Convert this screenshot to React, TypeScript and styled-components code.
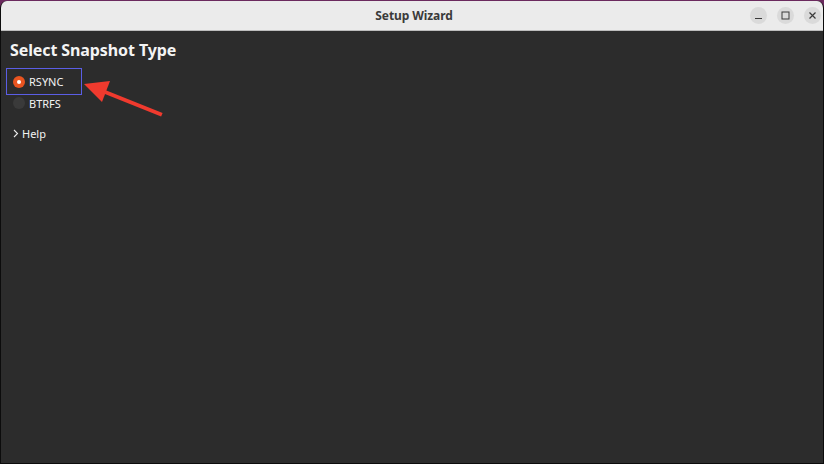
import React from "react";
import styled, { createGlobalStyle } from "styled-components";

const Global = createGlobalStyle`
  html, body { margin: 0; padding: 0; background: #5e2750; }
  body { font-family: "Noto Sans", "DejaVu Sans", sans-serif; }
  * { box-sizing: border-box; }
`;

const Screen = styled.div`
  width: 824px;
  height: 464px;
  padding-top: 1px;
  background: #6b2a5e;
  display: flex;
  flex-direction: column;
  position: relative;
  overflow: hidden;
`;

const Window = styled.div`
  flex: 1;
  display: flex;
  flex-direction: column;
  border: 1px solid #0c0c0c;
  border-top: none;
  border-radius: 7px 7px 0 0;
  overflow: hidden;
  background: #2c2c2c;
`;

const TitleBar = styled.div`
  height: 30px;
  flex: none;
  background: #ebebeb;
  border-bottom: 1px solid #bdbdbd;
  display: grid;
  grid-template-columns: 1fr auto 1fr;
  align-items: center;
`;

const Title = styled.div`
  grid-column: 2;
  font-size: 12px;
  font-weight: 700;
  color: #3a3a3a;
  letter-spacing: -0.1px;
  padding-left: 4px;
`;

const Controls = styled.div`
  grid-column: 3;
  justify-self: end;
  display: flex;
  gap: 10px;
  padding-right: 2px;
`;

const CtrlButton = styled.div`
  width: 17px;
  height: 17px;
  border-radius: 50%;
  background: #dadada;
  display: flex;
  align-items: center;
  justify-content: center;
  color: #3a3a3a;
`;

const Content = styled.div`
  flex: 1;
  padding: 8px 5px 0 5px;
  display: flex;
  flex-direction: column;
  color: #f2f2f2;
`;

const Heading = styled.h1`
  margin: 0 0 7px 4px;
  font-size: 16px;
  font-weight: 700;
  color: #f4f4f4;
  line-height: 22px;
  letter-spacing: -0.1px;
`;

const Options = styled.div`
  display: flex;
  flex-direction: column;
  align-items: flex-start;
`;

const OptionRow = styled.div<{ $focused?: boolean }>`
  display: flex;
  align-items: center;
  gap: 4px;
  height: ${(p) => (p.$focused ? "27px" : "16px")};
  width: ${(p) => (p.$focused ? "76px" : "auto")};
  padding-left: ${(p) => (p.$focused ? "6px" : "7px")};
  border: ${(p) => (p.$focused ? "1.5px solid #5b5ee6" : "none")};
  font-size: 11px;
  color: #f2f2f2;
`;

const Radio = styled.span<{ $checked?: boolean }>`
  width: 12px;
  height: 12px;
  border-radius: 50%;
  background: ${(p) => (p.$checked ? "#e95420" : "#3a3a3a")};
  display: flex;
  align-items: center;
  justify-content: center;
  flex: none;
  &::after {
    content: "";
    width: 4px;
    height: 4px;
    border-radius: 50%;
    background: ${(p) => (p.$checked ? "#ffffff" : "transparent")};
  }
`;

const Expander = styled.div`
  display: flex;
  align-items: center;
  gap: 3px;
  margin-top: 14px;
  padding-left: 7px;
  font-size: 11px;
  color: #f2f2f2;
  height: 16px;
`;

const Arrow = styled.svg`
  position: absolute;
  left: 80px;
  top: 78px;
`;

export default function App() {
  return (
    <>
      <Global />
      <Screen>
        <Window>
          <TitleBar>
            <Title>Setup Wizard</Title>
            <Controls>
              <CtrlButton>
                <svg width="9" height="9" viewBox="0 0 9 9">
                  <rect x="1" y="7" width="7" height="1" fill="#3a3a3a" />
                </svg>
              </CtrlButton>
              <CtrlButton>
                <svg width="9" height="9" viewBox="0 0 9 9">
                  <rect x="1" y="1" width="7" height="7" fill="none" stroke="#3a3a3a" strokeWidth="1" />
                </svg>
              </CtrlButton>
              <CtrlButton>
                <svg width="9" height="9" viewBox="0 0 9 9">
                  <path d="M1.5 1.5 L7.5 7.5 M7.5 1.5 L1.5 7.5" stroke="#3a3a3a" strokeWidth="1.2" />
                </svg>
              </CtrlButton>
            </Controls>
          </TitleBar>
          <Content>
            <Heading>Select Snapshot Type</Heading>
            <Options>
              <OptionRow $focused>
                <Radio $checked />
                RSYNC
              </OptionRow>
              <OptionRow>
                <Radio />
                BTRFS
              </OptionRow>
            </Options>
            <Expander>
              <svg width="6" height="9" viewBox="0 0 6 9">
                <path d="M1 1 L4.5 4.5 L1 8" fill="none" stroke="#e8e8e8" strokeWidth="1.1" />
              </svg>
              Help
            </Expander>
          </Content>
        </Window>
        <Arrow width="90" height="45" viewBox="0 0 90 45">
          <path d="M80 36 L20 12" stroke="#f03a2e" strokeWidth="4" strokeLinecap="square" />
          <polygon points="4,6 30,3 22,24" fill="#f03a2e" />
        </Arrow>
      </Screen>
    </>
  );
}
